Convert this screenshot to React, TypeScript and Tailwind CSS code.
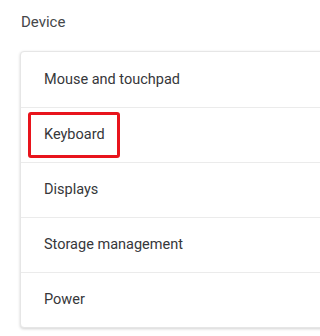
const items = ['Mouse and touchpad', 'Keyboard', 'Displays', 'Storage management', 'Power'];

export default function App() {
  return (
    <div className="w-screen h-[336px] overflow-hidden bg-white font-['Roboto',sans-serif]">
      <div className="pl-[21px] pt-[13px] h-[51px] text-[15px] leading-[18px] text-[#45474a]">Device</div>
      <div className="ml-[20px] w-[360px] rounded-[4px] border border-[#e6e6e6] bg-white shadow-[0_1px_3px_rgba(0,0,0,0.18)]">
        {items.map((label, i) => (
          <div
            key={label}
            className={`relative flex h-[55px] items-center pl-[23px] text-[14.5px] text-[#36373a] ${i > 0 ? 'border-t border-[#ebebeb]' : ''}`}
          >
            {label}
            {label === 'Keyboard' && (
              <div className="absolute left-[7px] top-[4px] h-[46px] w-[92px] rounded-[3px] border-[3px] border-[#e8141c]" />
            )}
          </div>
        ))}
      </div>
    </div>
  );
}
